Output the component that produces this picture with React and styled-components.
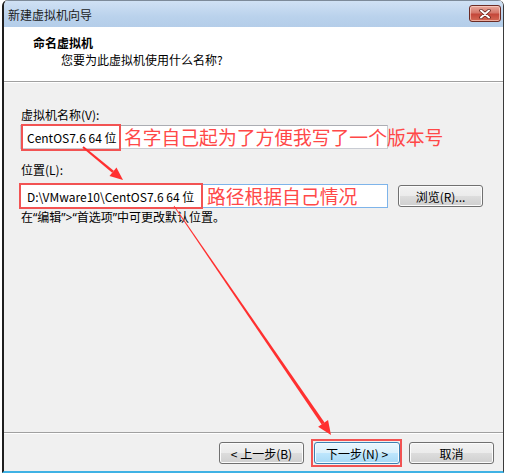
import React from "react";
import styled, { createGlobalStyle, css } from "styled-components";

const GlobalStyle = createGlobalStyle`
  html, body {
    margin: 0;
    padding: 0;
    background: #ffffff;
  }
  body {
    font-family: "Noto Sans CJK SC", "Noto Sans", sans-serif;
    font-size: 12px;
    color: #000;
  }
`;

const Screen = styled.div`
  position: relative;
  width: 507px;
  height: 476px;
  box-sizing: border-box;
  padding: 0 3px 3px 2px;
  background: #fff;
  overflow: hidden;
`;

const Window = styled.div`
  display: flex;
  flex-direction: column;
  height: 473px;
  box-sizing: border-box;
  border-left: 2px solid #1e1e1e;
  border-right: 1px solid #3a3a3a;
  border-bottom: 2px solid #3fb2e4;
  border-radius: 6px 6px 0 0;
  background: #f0f0f0;
  overflow: hidden;
`;

const TitleBar = styled.div`
  display: flex;
  align-items: center;
  justify-content: space-between;
  height: 27px;
  box-sizing: border-box;
  padding: 0 2px 0 4px;
  border-top: 1px solid #7d8a99;
  background: linear-gradient(#d0e1f4, #bad2ec 60%, #b4cde9);
`;

const Title = styled.span`
  font-size: 12px;
  line-height: 16px;
  color: #1b1b1b;
  margin-top: 1px;
`;

const CloseButton = styled.div`
  display: flex;
  align-items: center;
  justify-content: center;
  width: 32px;
  height: 17px;
  margin-top: -1px;
  box-sizing: border-box;
  border: 1px solid #6b2b24;
  border-radius: 3px;
  background: linear-gradient(#e9a99c, #d5776a 45%, #c4473a 55%, #d56a55);
  box-shadow: inset 0 0 0 1px rgba(255, 220, 210, 0.6);
`;

const Header = styled.div`
  height: 55px;
  box-sizing: border-box;
  padding: 8px 0 0 29px;
  background: #fff;
  border-bottom: 1px solid #a0a0a0;
`;

const Heading = styled.div`
  font-size: 12px;
  line-height: 16px;
  font-weight: 700;
`;

const SubHeading = styled.div`
  font-size: 12px;
  line-height: 16px;
  margin: 1px 0 0 28px;
`;

const Body = styled.div`
  flex: 1;
  padding: 25px 0 0 16px;
  box-shadow: inset 0 1px 0 #ffffff;
`;

const Label = styled.div`
  font-size: 12px;
  line-height: 16px;
  padding-left: 1px;
  margin-top: ${(p) => p.$top || 0}px;
`;

const Row = styled.div`
  display: flex;
  align-items: center;
  margin-top: ${(p) => p.$top || 0}px;
`;

const TextBox = styled.div`
  width: 368px;
  height: 24px;
  box-sizing: border-box;
  display: flex;
  align-items: center;
  padding-left: 6px;
  background: #fff;
  font-size: 12px;
  border: 1px solid #c9ccd3;
  border-top-color: #abadb3;
  ${(p) =>
    p.$focused &&
    css`
      border-color: #7eb4ea;
    `}
`;

const Button = styled.div`
  display: flex;
  align-items: center;
  justify-content: center;
  width: ${(p) => p.$width || 85}px;
  height: 22px;
  box-sizing: border-box;
  margin-left: ${(p) => p.$gap || 0}px;
  border: 1px solid #707070;
  border-radius: 3px;
  font-size: 12px;
  color: #000;
  background: linear-gradient(#f2f2f2, #ebebeb 50%, #dddddd 50%, #cfcfcf);
  box-shadow: inset 0 0 0 1px #fcfcfc;
  ${(p) =>
    p.$primary &&
    css`
      border-color: #3c7fb1;
      background: linear-gradient(#eaf6fd, #d9f0fc 50%, #bee6fd 50%, #a7d9f5);
      box-shadow: inset 0 0 0 1px #f5fbfe;
    `}
`;

const Hint = styled.div`
  font-family: "Noto Sans", "Noto Sans CJK SC", sans-serif;
  font-size: 12px;
  line-height: 16px;
  margin-top: 2px;
  padding-left: 1px;
`;

const Footer = styled.div`
  display: flex;
  justify-content: flex-end;
  height: 39px;
  box-sizing: border-box;
  padding: 9px 9px 0 0;
  border-top: 1px solid #a0a0a0;
  box-shadow: inset 0 1px 0 #ffffff;
`;

/* red annotations drawn on top of the dialog */
const RedBox = styled.div`
  position: absolute;
  box-sizing: border-box;
  border: 2px solid #f25353;
  left: ${(p) => p.$x}px;
  top: ${(p) => p.$y}px;
  width: ${(p) => p.$w}px;
  height: ${(p) => p.$h}px;
`;

const RedNote = styled.div`
  position: absolute;
  left: ${(p) => p.$x}px;
  top: ${(p) => p.$y}px;
  font-size: 18.8px;
  line-height: 22px;
  color: #ff4848;
  white-space: nowrap;
`;

const ArrowLayer = styled.svg`
  position: absolute;
  left: 0;
  top: 0;
  pointer-events: none;
`;

const Arrow = ({ x1, y1, x2, y2, w1 = 2, w2 = 2.5, head = 13, half = 5.5 }) => {
  const dx = x2 - x1;
  const dy = y2 - y1;
  const len = Math.hypot(dx, dy);
  const ux = dx / len;
  const uy = dy / len;
  const nx = -uy;
  const ny = ux;
  const bx = x2 - ux * head;
  const by = y2 - uy * head;
  const shaft = [
    [x1 + (nx * w1) / 2, y1 + (ny * w1) / 2],
    [bx + (nx * w2) / 2, by + (ny * w2) / 2],
    [bx - (nx * w2) / 2, by - (ny * w2) / 2],
    [x1 - (nx * w1) / 2, y1 - (ny * w1) / 2],
  ];
  const tip = [
    [x2, y2],
    [bx + nx * half, by + ny * half],
    [bx - nx * half, by - ny * half],
  ];
  const pts = (a) => a.map((p) => p.join(",")).join(" ");
  return (
    <g fill="#ff3030">
      <polygon points={pts(shaft)} />
      <polygon points={pts(tip)} />
    </g>
  );
};

const CloseIcon = () => (
  <svg width="14" height="10" viewBox="0 0 14 10">
    <path
      d="M3 1.5 L11 8.5 M11 1.5 L3 8.5"
      stroke="#5a1d16"
      strokeWidth="3.4"
      strokeLinecap="round"
    />
    <path
      d="M3 1.5 L11 8.5 M11 1.5 L3 8.5"
      stroke="#ffffff"
      strokeWidth="2"
      strokeLinecap="round"
    />
  </svg>
);

export default function App() {
  return (
    <>
      <GlobalStyle />
      <Screen>
        <Window>
          <TitleBar>
            <Title>新建虚拟机向导</Title>
            <CloseButton>
              <CloseIcon />
            </CloseButton>
          </TitleBar>

          <Header>
            <Heading>命名虚拟机</Heading>
            <SubHeading>您要为此虚拟机使用什么名称?</SubHeading>
          </Header>

          <Body>
            <Label>虚拟机名称(V):</Label>
            <Row $top={2}>
              <TextBox>CentOS7.6 64 位</TextBox>
            </Row>

            <Label $top={13}>位置(L):</Label>
            <Row $top={6}>
              <TextBox $focused>D:\VMware10\CentOS7.6 64 位</TextBox>
              <Button $gap={10}>浏览(R)...</Button>
            </Row>
            <Hint>在“编辑”&gt;“首选项”中可更改默认位置。</Hint>
          </Body>

          <Footer>
            <Button $width={85}>&lt; 上一步(B)</Button>
            <Button $width={86} $gap={10} $primary>
              下一步(N) &gt;
            </Button>
            <Button $width={85} $gap={9}>
              取消
            </Button>
          </Footer>
        </Window>

        <RedBox $x={21} $y={124} $w={100} $h={27} />
        <RedBox $x={19} $y={183} $w={184} $h={26} />
        <RedBox $x={311} $y={439} $w={91} $h={28} />

        <RedNote $x={124} $y={126}>
          名字自己起为了方便我写了一个版本号
        </RedNote>
        <RedNote $x={207} $y={185}>
          路径根据自己情况
        </RedNote>

        <ArrowLayer width="507" height="476" viewBox="0 0 507 476">
          <Arrow x1={83} y1={147} x2={123} y2={180} w1={2} w2={2.5} />
          <Arrow x1={174} y1={206} x2={331} y2={435} w1={0.8} w2={3.5} head={14} half={6} />
        </ArrowLayer>
      </Screen>
    </>
  );
}
